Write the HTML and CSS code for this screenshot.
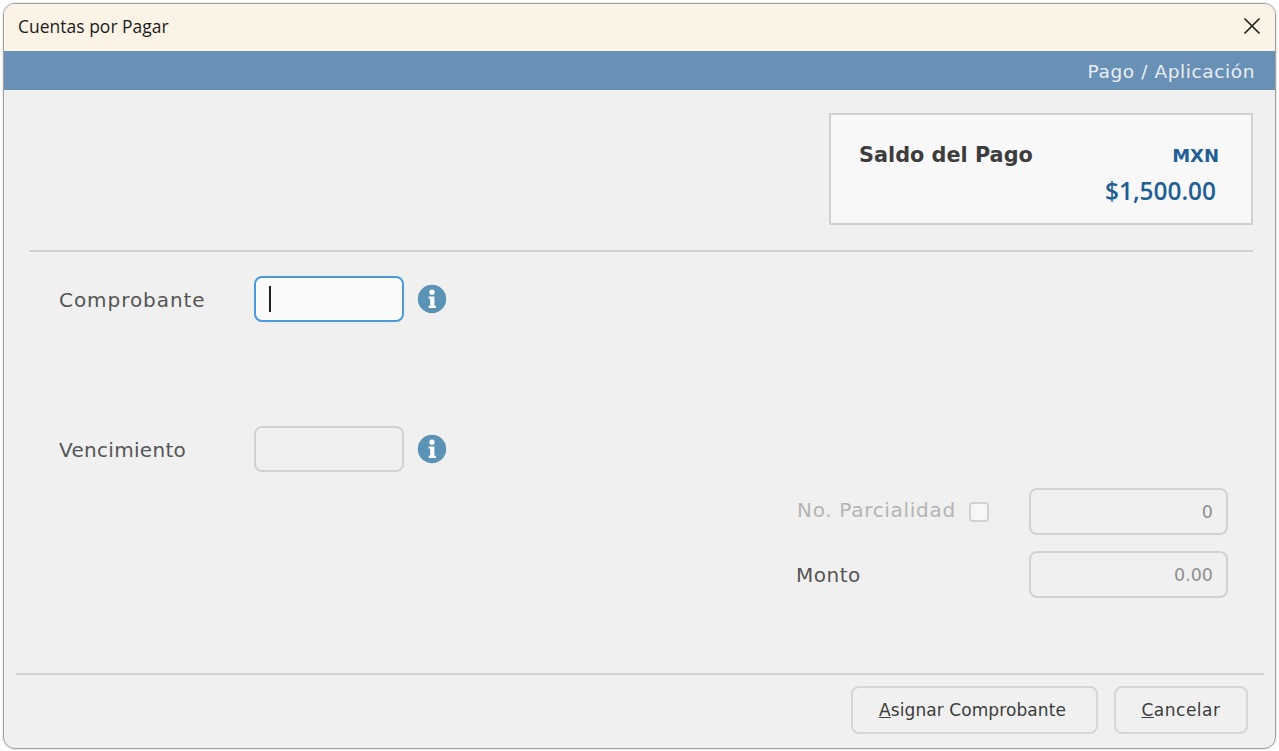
FILE: index.html
```html
<!DOCTYPE html>
<html lang="es">
<head>
<meta charset="utf-8">
<title>Cuentas por Pagar</title>
<link rel="stylesheet" href="styles.css">
</head>
<body>
<main class="window">
  <header class="titlebar">
    <span class="title">Cuentas por Pagar</span>
    <svg class="close" width="18" height="18" viewBox="0 0 18 18" aria-label="Cerrar"><path d="M1.5 1.5 L16.5 16.5 M16.5 1.5 L1.5 16.5" stroke="#222" stroke-width="1.7" fill="none"/></svg>
  </header>
  <div class="banner">Pago / Aplicación</div>
  <section class="summary-row">
    <div class="summary">
      <div class="summary-title">Saldo del Pago</div>
      <div class="summary-values">
        <div class="currency">MXN</div>
        <div class="amount">$1,500.00</div>
      </div>
    </div>
  </section>
  <hr class="rule rule-top">
  <section class="fields">
    <div class="field">
      <label class="label label-comprobante">Comprobante</label>
      <div class="input input-short input-focus"><span class="caret"></span></div>
      <svg class="info" width="30" height="30" viewBox="0 0 30 30"><circle cx="15" cy="15" r="14.2" fill="#5b93b6"/><circle cx="15" cy="8.2" r="2.6" fill="#fff"/><path d="M11.6 12.4h5.8v9.4h1.5v2.2h-7.2v-2.2h1.5v-7.2h-1.6z" fill="#fff"/></svg>
    </div>
    <div class="field field-vencimiento">
      <label class="label label-vencimiento">Vencimiento</label>
      <div class="input input-short"></div>
      <svg class="info" width="30" height="30" viewBox="0 0 30 30"><circle cx="15" cy="15" r="14.2" fill="#5b93b6"/><circle cx="15" cy="8.2" r="2.6" fill="#fff"/><path d="M11.6 12.4h5.8v9.4h1.5v2.2h-7.2v-2.2h1.5v-7.2h-1.6z" fill="#fff"/></svg>
    </div>
    <div class="right-fields">
      <div class="right-row">
        <span class="label label-disabled">No. Parcialidad</span>
        <span class="checkbox"></span>
        <div class="input input-wide">0</div>
      </div>
      <div class="right-row">
        <span class="label">Monto</span>
        <div class="input input-wide">0.00</div>
      </div>
    </div>
  </section>
  <footer class="footer">
    <hr class="rule">
    <div class="actions">
      <button class="btn btn-assign"><u>A</u>signar Comprobante</button>
      <button class="btn btn-cancel"><u>C</u>ancelar</button>
    </div>
  </footer>
</main>
</body>
</html>
```
FILE: styles.css
```css
* { box-sizing: border-box; }
html, body { margin: 0; height: 100%; }
body {
  background: #fff;
  padding: 3px;
  width: 1279px;
  height: 751px;
  overflow: hidden;
  font-family: "DejaVu Sans", "Liberation Sans", sans-serif;
}
.window {
  width: 1273px;
  height: 746px;
  background: #f0f0f0;
  border: 1px solid #a0a0a0;
  border-radius: 12px;
  box-shadow: 0 0 0 1px rgba(0, 0, 0, .08);
  overflow: hidden;
  display: flex;
  flex-direction: column;
}
.titlebar {
  height: 47px;
  flex: none;
  background: #fbf3e6;
  display: flex;
  align-items: center;
  justify-content: space-between;
  padding: 0 14px 3px 14px;
}
.title {
  font-family: "Open Sans", "Noto Sans", sans-serif;
  font-size: 17.5px;
  color: #1c1c1c;
}
.banner {
  height: 39px;
  flex: none;
  background: #6990b5;
  color: #e9eef3;
  font-size: 18.5px;
  letter-spacing: .6px;
  display: flex;
  align-items: center;
  justify-content: flex-end;
  padding: 2px 20px 0 0;
}
.summary-row {
  display: flex;
  justify-content: flex-end;
  padding: 23px 22px 0 0;
  flex: none;
}
.summary {
  width: 424px;
  height: 112px;
  background: #f8f8f8;
  border: 2px solid #d0d0d0;
  display: flex;
  justify-content: space-between;
  padding: 25px 32px 0 28px;
}
.summary-title {
  font-weight: 700;
  font-size: 20.8px;
  color: #3d3d3d;
  margin-top: 3px;
}
.summary-values {
  text-align: right;
  color: #215f95;
  font-weight: 700;
}
.currency { font-size: 18px; margin-top: 5px; }
.amount {
  font-size: 24.4px;
  margin-top: 8px;
  margin-right: 3px;
  font-family: "Open Sans", sans-serif;
  font-weight: 600;
}
.rule {
  margin: 0;
  border: 0;
  height: 2px;
  background: #d2d2d2;
}
.rule-top { margin: 25px 22px 0 25px; flex: none; }
.fields {
  flex: 1;
  display: flex;
  flex-direction: column;
  padding: 24px 47px 0 55px;
}
.field {
  display: flex;
  align-items: center;
  height: 46px;
}
.field-vencimiento { margin-top: 104px; }
.label {
  font-size: 20px;
  letter-spacing: .5px;
  color: #555;
  width: 195px;
  flex: none;
}
.label-comprobante { letter-spacing: .95px; padding-top: 2px; }
.label-vencimiento { letter-spacing: .3px; padding-top: 2px; }
.input {
  height: 46px;
  border: 2px solid #d2d2d2;
  border-radius: 8px;
  background: #f0f0f0;
  flex: none;
}
.input-short { width: 150px; }
.input-focus {
  background: #fafafa;
  border: 2px solid #4a9ae0;
  display: flex;
  align-items: center;
  padding-left: 13px;
}
.caret { width: 2px; height: 26px; background: #222; }
.info { margin-left: 13px; flex: none; }
.right-fields {
  display: flex;
  flex-direction: column;
  gap: 16px;
  margin-top: 16px;
  align-self: flex-end;
  width: 432px;
}
.right-row {
  display: flex;
  align-items: center;
  height: 47px;
}
.right-row .label { width: 233px; }
.right-row .label-disabled {
  width: 172px;
  margin: 0 0 3px 1px;
  letter-spacing: .7px;
  color: #b4b4b4;
}
.checkbox {
  width: 20px;
  height: 20px;
  border: 2px solid #d2d2d2;
  border-radius: 4px;
  background: #f7f7f7;
  margin-right: 40px;
  flex: none;
}
.input-wide {
  width: 199px;
  height: 47px;
  font-size: 17.5px;
  color: #8f8f8f;
  display: flex;
  align-items: center;
  justify-content: flex-end;
  padding-right: 13px;
}
.footer {
  flex: none;
  padding: 0 11px 14px 12px;
}
.actions {
  display: flex;
  justify-content: flex-end;
  gap: 16px;
  margin-top: 11px;
  padding-right: 16px;
}
.btn {
  height: 48px;
  background: #f0f0f0;
  border: 2px solid #d6d6d6;
  border-radius: 8px;
  font-family: "DejaVu Sans", sans-serif;
  font-size: 17px;
  color: #3c3c3c;
  padding: 0;
}
.btn-assign { width: 247px; letter-spacing: .08px; padding-right: 4px; }
.btn-cancel { width: 134px; letter-spacing: .5px; }
```
